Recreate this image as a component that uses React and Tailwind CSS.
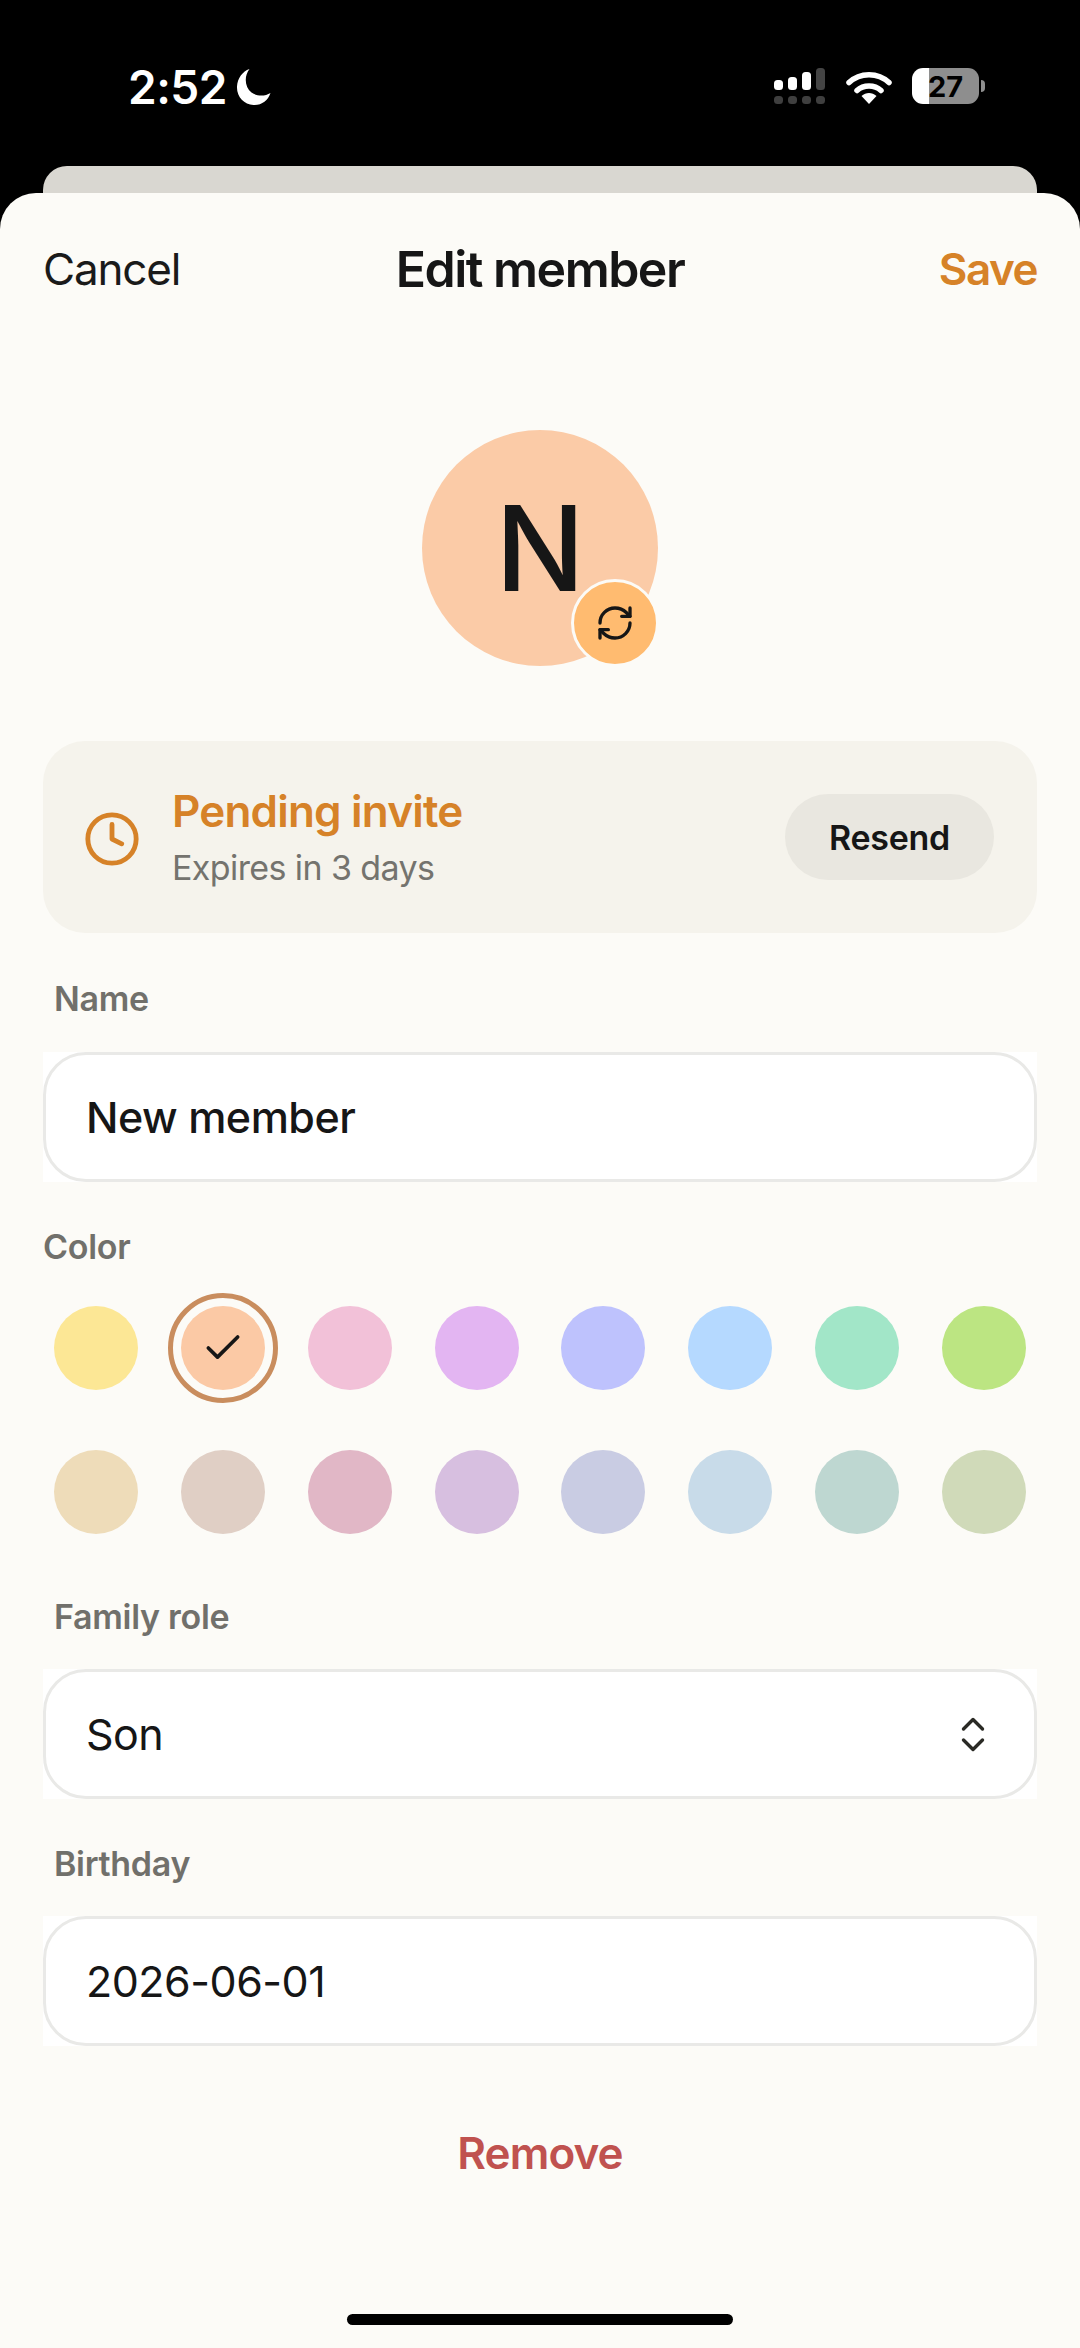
import React from "react";
import { RefreshCw, Clock, Check } from "lucide-react";

const row1 = ["#FCE795", "#FBC9A5", "#F2C1D8", "#E3B5F2", "#BEC2FD", "#B5D9FF", "#A2E6C8", "#BCE582"];
const row2 = ["#EEDCB9", "#E0CFC5", "#E1B7C6", "#D7BFE0", "#C9CCE3", "#C8DBE9", "#BED7D1", "#D0DAB9"];

function Signal() {
  return (
    <svg width="52" height="38" viewBox="0 0 52 38" className="block">
      <rect x="0" y="12" width="9" height="10" rx="3.5" fill="#fff" />
      <rect x="14" y="9" width="9" height="13" rx="3.5" fill="#fff" />
      <rect x="28" y="4" width="9" height="18" rx="3.5" fill="#fff" />
      <rect x="42" y="0" width="9" height="22" rx="3.5" fill="#444" />
      <rect x="0" y="28" width="9" height="8" rx="3.5" fill="#3f3f3f" />
      <rect x="14" y="28" width="9" height="8" rx="3.5" fill="#3f3f3f" />
      <rect x="28" y="28" width="9" height="8" rx="3.5" fill="#3f3f3f" />
      <rect x="42" y="28" width="9" height="8" rx="3.5" fill="#3f3f3f" />
    </svg>
  );
}

function Wifi() {
  return (
    <svg width="46" height="36" viewBox="0 0 46 36" fill="none" className="block">
      <path d="M3 13.5C14 3 32 3 43 13.5" stroke="#fff" strokeWidth="5.5" strokeLinecap="round" />
      <path d="M11 21.5C17.5 15.5 28.5 15.5 35 21.5" stroke="#fff" strokeWidth="5.5" strokeLinecap="round" />
      <path d="M15.5 27C20 23 26 23 30.5 27L23 35Z" fill="#fff" />
    </svg>
  );
}

function Moon() {
  return (
    <svg width="36" height="38" viewBox="0 0 36 38" className="block">
      <path d="M13.5 1C8 8 8.5 19 15.5 24.5C21 28.5 29 28.5 34.5 25C32 32.5 25.5 37.5 17.5 37C8 36.5 0.5 28.5 1 18.5C1.5 10 6.5 3.5 13.5 1Z" fill="#fff" />
    </svg>
  );
}

function Updown() {
  return (
    <svg width="24" height="35" viewBox="0 0 24 35" fill="none" className="block">
      <path d="M2.5 12L12 2.5L21.5 12" stroke="#2A2A25" strokeWidth="3.4" strokeLinecap="round" strokeLinejoin="round" />
      <path d="M2.5 23L12 32.5L21.5 23" stroke="#2A2A25" strokeWidth="3.4" strokeLinecap="round" strokeLinejoin="round" />
    </svg>
  );
}

function Field({ className = "", children }) {
  return (
    <div className="bg-white">
      <div className={"h-[130px] rounded-[43px] border-[3px] border-[#E9E9E7] bg-white pl-[40px] pr-[49px] flex items-center justify-between text-[43px] text-[#161616] " + className}>
        {children}
      </div>
    </div>
  );
}

function Label({ children, className = "" }) {
  return (
    <div className={"h-[40px] flex items-center text-[34px] font-semibold text-[#71706B] tracking-[-0.3px] " + className}>
      {children}
    </div>
  );
}

function Swatch({ color, selected }) {
  return (
    <div className="relative h-[84px] w-[84px] rounded-full flex items-center justify-center" style={{ backgroundColor: color }}>
      {selected && (
        <>
          <div className="absolute -inset-[13px] rounded-full border-[5px] border-[#C98D5E]" />
          <Check size={44} strokeWidth={2} color="#161616" />
        </>
      )}
    </div>
  );
}

export default function App() {
  return (
    <div className="w-[1080px] h-[2348px] bg-black overflow-hidden font-['Inter',sans-serif]">
      <div className="h-[166px] pl-[128px] pr-[95px] pt-[68px] flex justify-between items-start">
        <div className="flex items-center gap-[9px] h-[38px]">
          <span className="text-white text-[46px] font-semibold tracking-[-0.5px] leading-none">2:52</span>
          <Moon />
        </div>
        <div className="flex items-start gap-[20px]">
          <Signal />
          <div className="pt-[1px]"><Wifi /></div>
          <div className="flex items-center gap-[2px]">
            <div className="w-[67px] h-[36px] rounded-[11px] bg-[linear-gradient(90deg,#ffffff_25%,#8e8e8e_25%)] flex items-center justify-center text-black text-[29px] font-bold leading-none">27</div>
            <div className="w-[4px] h-[12px] rounded-r-full bg-[#8e8e8e]" />
          </div>
        </div>
      </div>
      <div className="h-[27px] mx-[43px] rounded-t-[24px] bg-[#D9D7D1]" />
      <div className="h-[2155px] rounded-t-[36px] bg-[#FCFBF7] px-[43px]">
        <div className="h-[152px] flex items-center justify-between relative">
          <span className="text-[44px] text-[#1A1A1A] tracking-[-1.2px]">Cancel</span>
          <span className="absolute left-0 right-0 text-center text-[50px] font-semibold text-[#161616] tracking-[-1.5px]">Edit member</span>
          <span className="text-[44px] font-semibold text-[#D68228] tracking-[-1.5px]">Save</span>
        </div>

        <div className="mt-[85px] flex justify-center">
          <div className="relative h-[236px] w-[236px] rounded-full bg-[#FBCBA7] flex items-center justify-center">
            <span className="text-[118px] leading-none font-medium text-[#161616]">N</span>
            <div className="absolute -right-[1px] -bottom-[1px] h-[88px] w-[88px] rounded-full bg-[#FFBB70] border-[3px] border-[#FCFBF7] flex items-center justify-center">
              <RefreshCw size={40} strokeWidth={2} color="#161616" />
            </div>
          </div>
        </div>

        <div className="mt-[75px] h-[192px] rounded-[42px] bg-[#F5F3EC] pl-[40px] pr-[43px] flex items-center">
          <Clock size={58} strokeWidth={2} color="#D68228" className="mt-[3px]" />
          <div className="ml-[31px] flex-1">
            <div className="text-[44px] font-semibold text-[#D68228] leading-[50px] tracking-[-0.8px]">Pending invite</div>
            <div className="mt-[12px] text-[34px] text-[#74736E] leading-[40px] tracking-[-0.6px]">Expires in 3 days</div>
          </div>
          <div className="h-[86px] w-[209px] rounded-full bg-[#E9E7E0] flex items-center justify-center text-[34px] font-semibold text-[#161616] tracking-[-0.3px]">Resend</div>
        </div>

        <Label className="mt-[45px] pl-[11px]">Name</Label>
        <div className="mt-[34px]">
          <Field className="font-medium tracking-[-0.5px]">New member</Field>
        </div>

        <Label className="mt-[44px]">Color</Label>
        <div className="mt-[40px] flex justify-between px-[11px]">
          {row1.map((c, i) => <Swatch key={c} color={c} selected={i === 1} />)}
        </div>
        <div className="mt-[60px] flex justify-between px-[11px]">
          {row2.map((c) => <Swatch key={c} color={c} />)}
        </div>

        <Label className="mt-[62px] pl-[11px]">Family role</Label>
        <div className="mt-[33px]">
          <Field className="tracking-[-0.5px]">
            <span>Son</span>
            <Updown />
          </Field>
        </div>

        <Label className="mt-[44px] pl-[11px]">Birthday</Label>
        <div className="mt-[33px]">
          <Field className="tracking-[-0.5px]">2026-06-01</Field>
        </div>

        <div className="mt-[77px] h-[60px] flex items-center justify-center text-[44px] font-semibold text-[#C0524F] tracking-[-0.9px]">Remove</div>

        <div className="mt-[131px] mx-auto h-[11px] w-[386px] rounded-full bg-black" />
      </div>
    </div>
  );
}
